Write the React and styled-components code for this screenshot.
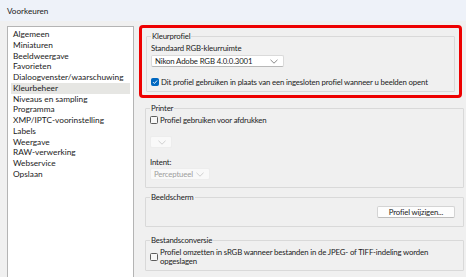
import React from 'react';
import styled, { createGlobalStyle } from 'styled-components';

const GlobalStyle = createGlobalStyle`
  html, body {
    margin: 0;
    padding: 0;
    background: #f0f0f0;
  }
  body {
    font-family: Lato, "Noto Sans", sans-serif;
    font-size: 8.3px;
    color: #1b1b1b;
  }
`;

const categories = [
  'Algemeen',
  'Miniaturen',
  'Beeldweergave',
  'Favorieten',
  'Dialoogvenster/waarschuwing',
  'Kleurbeheer',
  'Niveaus en sampling',
  'Programma',
  'XMP/IPTC-voorinstelling',
  'Labels',
  'Weergave',
  'RAW-verwerking',
  'Webservice',
  'Opslaan',
];

const Chevron = ({ color = '#6b6b6b' }) => (
  <svg width="8" height="5" viewBox="0 0 8 5">
    <path d="M0.5 0.8 L4 4.2 L7.5 0.8" fill="none" stroke={color} strokeWidth="0.8" />
  </svg>
);

const CheckMark = () => (
  <svg width="6" height="6" viewBox="0 0 6 6">
    <path d="M1 3.1 L2.4 4.5 L5.1 1.5" fill="none" stroke="#fff" strokeWidth="0.9" />
  </svg>
);

export default function App() {
  return (
    <>
      <GlobalStyle />
      <Window>
        <TitleBar>Voorkeuren</TitleBar>
        <Body>
          <CategoryList>
            {categories.map((c) => (
              <ListItem key={c} selected={c === 'Kleurbeheer'}>
                {c}
              </ListItem>
            ))}
          </CategoryList>

          <SettingsPanel>
            <Highlight>
              <GroupBox tight pb={4}>
                <Legend>Kleurprofiel</Legend>
                <FieldLabel>Standaard RGB-kleurruimte</FieldLabel>
                <Select width={133}>
                  <span>Nikon Adobe RGB 4.0.0.3001</span>
                  <Chevron />
                </Select>
                <CheckRow top={10}>
                  <CheckBox checked>
                    <CheckMark />
                  </CheckBox>
                  <span>Dit profiel gebruiken in plaats van een ingesloten profiel wanneer u beelden opent</span>
                </CheckRow>
              </GroupBox>
            </Highlight>

            <GroupBox mt={5} pb={7}>
              <Legend>Printer</Legend>
              <CheckRow top={2}>
                <CheckBox />
                <span>Profiel gebruiken voor afdrukken</span>
              </CheckRow>
              <Select width={22} disabled top={11}>
                <span />
                <Chevron color="#c4c4c4" />
              </Select>
              <FieldLabel top={9}>Intent:</FieldLabel>
              <Select width={60} disabled top={1}>
                <span>Perceptueel</span>
                <Chevron color="#c4c4c4" />
              </Select>
            </GroupBox>

            <GroupBox mt={4} pb={8}>
              <Legend>Beeldscherm</Legend>
              <ButtonRow>
                <Button>Profiel wijzigen...</Button>
              </ButtonRow>
            </GroupBox>

            <GroupBox mt={8} pb={4}>
              <Legend>Bestandsconversie</Legend>
              <CheckRow top={3} multiline>
                <CheckBox />
                <span>
                  Profiel omzetten in sRGB wanneer bestanden in de JPEG- of TIFF-indeling worden
                  <br />
                  opgeslagen
                </span>
              </CheckRow>
            </GroupBox>
          </SettingsPanel>
        </Body>
      </Window>
    </>
  );
}

const Window = styled.div`
  width: 466px;
  height: 277px;
  overflow: hidden;
  display: flex;
  flex-direction: column;
  background: #f0f0f0;
`;

const TitleBar = styled.div`
  height: 21px;
  flex: none;
  display: flex;
  align-items: center;
  padding-left: 7px;
  background: #eef2f9;
  font-size: 8.1px;
  color: #1a1a1a;
`;

const Body = styled.div`
  flex: 1;
  display: flex;
  align-items: stretch;
  padding: 5px 0 0 7px;
  min-height: 0;
`;

const CategoryList = styled.div`
  width: 127px;
  flex: none;
  box-sizing: border-box;
  background: #fff;
  border: 1px solid #b4b4b4;
  border-bottom: none;
  padding: 2px 3px 0 3px;
`;

const ListItem = styled.div`
  height: 10.75px;
  line-height: 10.75px;
  padding-left: 2px;
  white-space: nowrap;
  background: ${(p) => (p.selected ? '#e6e6e3' : 'transparent')};
`;

const SettingsPanel = styled.div`
  flex: 1;
  display: flex;
  flex-direction: column;
  padding-left: 5px;
  min-width: 0;
  font-size: 7.8px;
  letter-spacing: -0.15px;
`;

const Highlight = styled.div`
  margin-top: -1px;
  width: 323px;
  box-sizing: border-box;
  border: 3px solid #ee0000;
  border-radius: 4px;
  padding: 3px 3px 3px 4px;
`;

const GroupBox = styled.fieldset`
  margin: ${(p) => (p.tight ? '0' : `${p.mt}px 0 0 6px`)};
  width: ${(p) => (p.tight ? '309px' : '319px')};
  box-sizing: border-box;
  border: 1px solid #d9d9d9;
  border-radius: 1px;
  padding: 0 8px ${(p) => p.pb}px 4px;
  min-width: 0;
  display: flex;
  flex-direction: column;
  align-items: flex-start;
`;

const Legend = styled.legend`
  padding: 0 1px;
  margin-left: 0;
  line-height: 10px;
`;

const FieldLabel = styled.div`
  margin-top: ${(p) => p.top || 2}px;
  line-height: 10px;
`;

const Select = styled.div`
  margin-top: ${(p) => p.top || 2}px;
  width: ${(p) => p.width}px;
  height: 12px;
  box-sizing: border-box;
  display: flex;
  align-items: center;
  justify-content: space-between;
  padding: 0 5px 0 3px;
  background: ${(p) => (p.disabled ? '#f9f9f9' : '#fff')};
  color: ${(p) => (p.disabled ? '#9d9d9d' : '#1b1b1b')};
  border: 1px solid ${(p) => (p.disabled ? '#ededed' : '#dadada')};
  border-bottom-color: ${(p) => (p.disabled ? '#ededed' : '#b8b8b8')};
  border-radius: 2px;
`;

const CheckRow = styled.div`
  margin-top: ${(p) => p.top}px;
  display: flex;
  align-items: center;
  gap: 2px;
  line-height: ${(p) => (p.multiline ? '9px' : '10px')};
`;

const CheckBox = styled.div`
  width: 8px;
  height: 8px;
  flex: none;
  box-sizing: border-box;
  border-radius: 1.5px;
  display: flex;
  align-items: center;
  justify-content: center;
  background: ${(p) => (p.checked ? '#0067c0' : '#f7f7f7')};
  border: 1px solid ${(p) => (p.checked ? '#0067c0' : '#5c5c5c')};
`;

const ButtonRow = styled.div`
  align-self: stretch;
  display: flex;
  justify-content: flex-end;
  padding-top: 4px;
`;

const Button = styled.div`
  width: 78px;
  height: 12px;
  box-sizing: border-box;
  display: flex;
  align-items: center;
  justify-content: center;
  background: #fdfdfd;
  border: 1px solid #d4d4d4;
  border-bottom-color: #bcbcbc;
  border-radius: 2px;
`;
